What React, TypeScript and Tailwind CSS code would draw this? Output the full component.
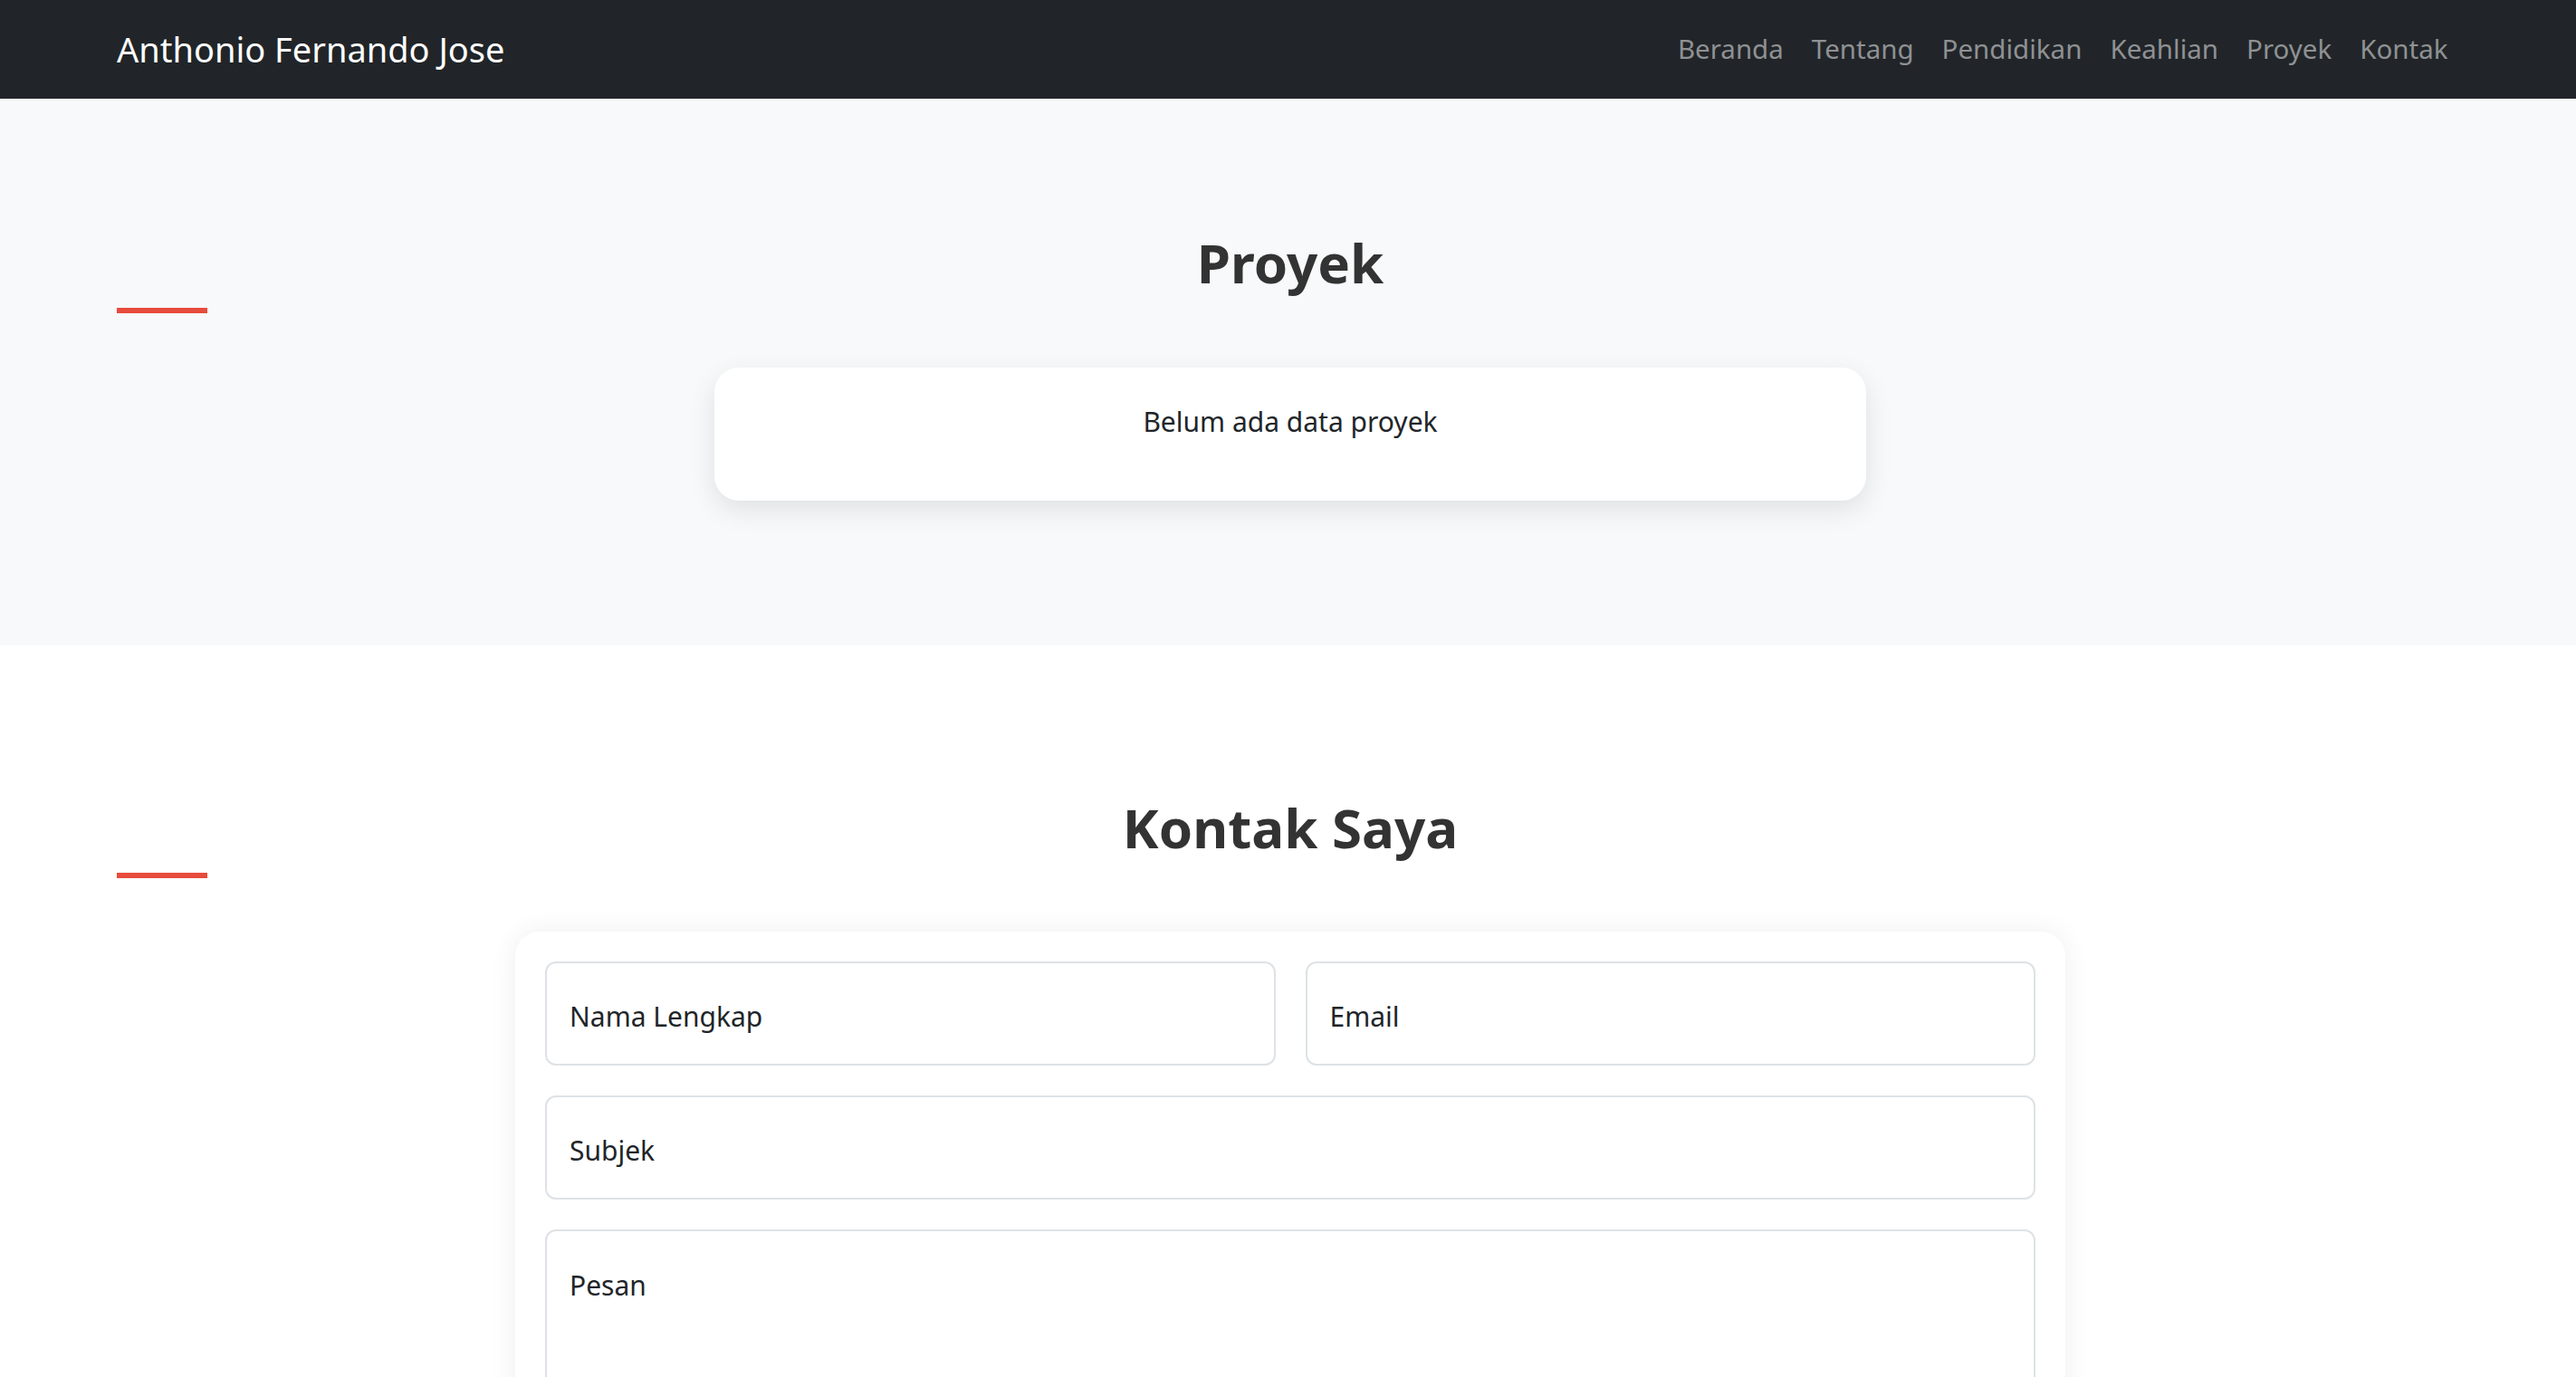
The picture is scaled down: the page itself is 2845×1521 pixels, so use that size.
const font = { fontFamily: '"Noto Sans", "Open Sans", sans-serif' };

const links = ['Beranda', 'Tentang', 'Pendidikan', 'Keahlian', 'Proyek', 'Kontak'];

function SectionTitle({ title }: { title: string }) {
  return (
    <div className="px-[129px]">
      <h2 className="pl-[5px] text-center text-[60px] leading-[72px] font-bold text-[#333333]">{title}</h2>
      <div className="mt-[14px] h-[6px] w-[100px] bg-[#e74c3c]" />
    </div>
  );
}

const field =
  'rounded-[12px] border-2 border-[#dee2e6] px-[25px] text-[30px] text-[#212529] placeholder:text-[#212529] outline-none';

export default function App() {
  return (
    <div className="min-h-screen bg-white text-[#212529]" style={font}>
      <nav className="flex h-[109px] items-center justify-between bg-[#212529] pl-[129px] pr-[126px]">
        <a className="text-[38px] leading-[1.5] text-white">Anthonio Fernando Jose</a>
        <ul className="flex items-center">
          {links.map((link) => (
            <li key={link}>
              <a className="block px-[15.5px] text-[29.5px] leading-[1.5] text-[#8f9193]">{link}</a>
            </li>
          ))}
        </ul>
      </nav>

      <section className="bg-[#f8f9fa] pt-[145px] pb-[160px]">
        <SectionTitle title="Proyek" />
        <div className="pl-[5px]">
          <div className="mx-auto mt-[60px] w-[1272px] rounded-[27px] bg-white pt-[37px] pb-[65px] text-center shadow-[0_10px_30px_rgba(0,0,0,0.1)]">
            <p className="text-[30px] leading-[1.5]">Belum ada data proyek</p>
          </div>
        </div>
      </section>

      <section className="pt-[165px] pb-[145px]">
        <SectionTitle title="Kontak Saya" />
        <div className="pl-[5px]">
          <form className="mx-auto mt-[59px] w-[1712px] rounded-[27px] bg-white p-[33px] shadow-[0_0_30px_rgba(0,0,0,0.07)]">
            <div className="grid grid-cols-2 gap-[33px]">
              <input className={`h-[115px] pt-[6px] ${field}`} placeholder="Nama Lengkap" />
              <input className={`h-[115px] pt-[6px] ${field}`} placeholder="Email" />
            </div>
            <input className={`mt-[33px] block h-[115px] w-full pt-[6px] ${field}`} placeholder="Subjek" />
            <textarea
              className={`mt-[33px] block h-[260px] w-full resize-none pt-[37px] leading-[1.5] ${field}`}
              placeholder="Pesan"
            />
          </form>
        </div>
      </section>
    </div>
  );
}
